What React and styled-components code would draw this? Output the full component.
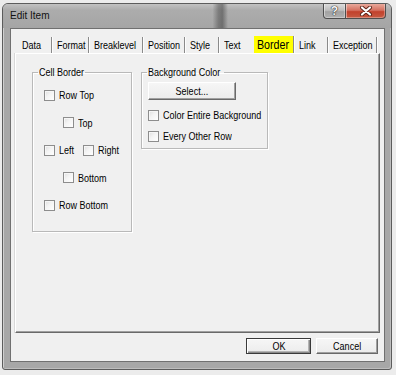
import React from 'react';
import styled, { createGlobalStyle } from 'styled-components';

const GlobalStyle = createGlobalStyle`
  html, body {
    margin: 0;
    padding: 0;
  }
  body {
    width: 396px;
    height: 375px;
    overflow: hidden;
    background: #ececec;
    font-family: "Liberation Sans", Arial, sans-serif;
    font-size: 11px;
    color: #000;
  }
`;

const Screen = styled.div`
  padding: 3px 0 0 2px;
`;

// the dialog font is a narrow face; squeeze Liberation Sans to its width
const Narrow = styled.span`
  display: inline-block;
  white-space: nowrap;
  transform: scaleX(0.82);
  transform-origin: ${p => p.$origin || 'left'} center;
`;

const Window = styled.div`
  width: 390px;
  height: 367px;
  box-sizing: border-box;
  display: flex;
  flex-direction: column;
  border: 1px solid #5c5c5c;
  border-radius: 6px 6px 3px 3px;
  background: #a7a7a7;
  box-shadow: inset 1px 1px 0 #cfcfcf, inset -1px -1px 0 #bdbdbd;
  overflow: hidden;
`;

const TitleBar = styled.div`
  height: 24px;
  flex-shrink: 0;
  display: flex;
  align-items: flex-start;
  background:
    linear-gradient(90deg, transparent 54%, rgba(40, 40, 40, 0.35) 55.5%, rgba(40, 40, 40, 0.45) 56.5%, transparent 58%),
    linear-gradient(180deg, #c2c2c2 0%, #acacac 25%, #a5a5a5 100%);
`;

const Title = styled.div`
  flex: 1;
  padding-left: 7px;
  line-height: 24px;
  font-size: 10px;
  color: #111;
`;

const CaptionButtons = styled.div`
  display: flex;
  margin-right: 5px;
`;

const CaptionButton = styled.div`
  width: ${p => p.$w}px;
  height: 15px;
  box-sizing: border-box;
  display: flex;
  align-items: center;
  justify-content: center;
  border: 1px solid #4e4e4e;
  border-top: none;
  border-left-width: ${p => (p.$first ? 1 : 0)}px;
  border-radius: ${p => (p.$first ? '0 0 0 4px' : '0 0 4px 0')};
  background: ${p =>
    p.$danger
      ? 'linear-gradient(180deg, #e9a99b 0%, #d47060 45%, #c2412c 55%, #c65a42 100%)'
      : 'linear-gradient(180deg, #dcdcdc 0%, #bdbdbd 45%, #a2a2a2 55%, #b0b0b0 100%)'};
  box-shadow: inset 1px 0 0 rgba(255, 255, 255, 0.45), inset -1px -1px 0 rgba(255, 255, 255, 0.3);
`;

const HelpGlyph = styled.span`
  font-weight: bold;
  font-size: 12px;
  line-height: 1;
  color: #f4f4f4;
  text-shadow: 0 0 1px #333, 0 0 1px #333, 0 0 1px #333;
`;

const Body = styled.div`
  flex: 1;
  display: flex;
  padding: 0 6px 7px 7px;
`;

const Client = styled.div`
  flex: 1;
  display: flex;
  flex-direction: column;
  border: 1px solid #707070;
  background: #f0f0f0;
  padding: 8px 4px 7px 4px;
`;

const TabRow = styled.div`
  display: flex;
  height: 16px;
  padding-left: 2px;
`;

const Tab = styled.div`
  width: ${p => p.$w}px;
  height: ${p => (p.$selected ? 17 : 16)}px;
  margin-top: ${p => (p.$selected ? -1 : 0)}px;
  box-sizing: border-box;
  padding-left: ${p => (p.$selected ? 3 : 5)}px;
  line-height: ${p => (p.$selected ? 17 : 16)}px;
  overflow: visible;
  background: ${p => (p.$selected ? '#ffff00' : 'transparent')};
  border-right: 1px solid ${p => (p.$divider ? '#8a8a8a' : 'transparent')};
  box-shadow: ${p => (p.$divider ? '1px 0 0 #fdfdfd' : 'none')};
  font-size: ${p => (p.$selected ? 13 : 11)}px;
`;

const Panel = styled.div`
  height: 280px;
  box-sizing: border-box;
  display: flex;
  align-items: flex-start;
  gap: 9px;
  padding: 12px 0 0 16px;
  border: 1px solid;
  border-color: #ffffff #696969 #696969 #ffffff;
  box-shadow: inset -1px -1px 0 #a0a0a0, -1px 0 0 #d8d8d8;
`;

const Group = styled.fieldset`
  margin: 0;
  min-width: 0;
  box-sizing: border-box;
  width: ${p => p.$w}px;
  height: ${p => p.$h}px;
  padding: ${p => p.$pad};
  border: 1px solid #b9b9b9;
  box-shadow: inset 1px 1px 0 #fff, 1px 1px 0 #fff;
  display: flex;
  flex-direction: column;
  align-items: flex-start;
`;

const Legend = styled.legend`
  box-sizing: border-box;
  width: ${p => p.$w}px;
  padding: 0 1px;
  margin-left: ${p => p.$offset}px;
  line-height: 13px;
  white-space: nowrap;
`;

const Rows = styled.div`
  display: flex;
  flex-direction: column;
  gap: ${p => p.$gap}px;
`;

const Row = styled.div`
  display: flex;
  align-items: center;
  gap: 8px;
  height: 14px;
  padding-left: ${p => p.$indent || 0}px;
`;

const CheckLabel = styled.label`
  display: flex;
  align-items: center;
  gap: 4px;
  width: ${p => (p.$w ? `${p.$w}px` : 'auto')};
`;

const Box = styled.input`
  appearance: none;
  flex-shrink: 0;
  margin: 0;
  width: 11px;
  height: 11px;
  border: 1px solid #8d8d8d;
  background: linear-gradient(135deg, #dedede 0%, #f4f4f4 45%, #ffffff 100%);
  box-shadow: inset 1px 1px 0 #f6f6f6;
`;

const Button = styled.button`
  width: ${p => p.$w}px;
  height: ${p => p.$h}px;
  margin: 0;
  padding: 0;
  font: inherit;
  color: #000;
  background: linear-gradient(180deg, #f6f6f6 0%, #ececec 100%);
  border: 1px solid;
  border-color: ${p => (p.$default ? '#3a3a3a' : '#ffffff #696969 #696969 #ffffff')};
  box-shadow: ${p =>
    p.$default
      ? 'inset 1px 1px 0 #fff, inset -1px -1px 0 #8a8a8a, inset -2px -2px 0 #b4b4b4'
      : 'inset -1px -1px 0 #a0a0a0'};
`;

const SelectButton = styled(Button)`
  margin-top: 3px;
`;

const BgRows = styled(Rows)`
  margin-top: 8px;
`;

const Footer = styled.div`
  display: flex;
  justify-content: flex-end;
  gap: 5px;
  margin-top: 5px;
  padding-right: 2px;
`;

const tabs = [
  { label: 'Data', w: 35 },
  { label: 'Format', w: 37 },
  { label: 'Breaklevel', w: 54 },
  { label: 'Position', w: 42 },
  { label: 'Style', w: 34 },
  { label: 'Text', w: 35, noDivider: true },
  { label: 'Border', w: 40, selected: true },
  { label: 'Link', w: 34 },
  { label: 'Exception', w: 49 },
];

const Check = ({ label, w }) => (
  <CheckLabel $w={w}>
    <Box type="checkbox" />
    <Narrow>{label}</Narrow>
  </CheckLabel>
);

const CloseGlyph = () => (
  <svg width="14" height="10" viewBox="0 0 14 10">
    <path d="M3 1.5 L11 8.5 M11 1.5 L3 8.5" stroke="#5a2418" strokeWidth="4" strokeLinecap="round" fill="none" />
    <path d="M3 1.5 L11 8.5 M11 1.5 L3 8.5" stroke="#ffffff" strokeWidth="2.2" strokeLinecap="round" fill="none" />
  </svg>
);

export default function App() {
  return (
    <Screen>
      <GlobalStyle />
      <Window>
        <TitleBar>
          <Title>Edit Item</Title>
          <CaptionButtons>
            <CaptionButton $w={23} $first>
              <HelpGlyph>?</HelpGlyph>
            </CaptionButton>
            <CaptionButton $w={40} $danger>
              <CloseGlyph />
            </CaptionButton>
          </CaptionButtons>
        </TitleBar>
        <Body>
          <Client>
            <TabRow>
              {tabs.map(t => (
                <Tab key={t.label} $w={t.w} $selected={t.selected} $divider={!t.noDivider}>
                  <Narrow>{t.label}</Narrow>
                </Tab>
              ))}
            </TabRow>
            <Panel>
              <Group $w={100} $h={166} $pad="9px 0 0 11px">
                <Legend $offset={-6} $w={47}><Narrow>Cell Border</Narrow></Legend>
                <Rows $gap={13.5}>
                  <Row><Check label="Row Top" /></Row>
                  <Row $indent={19}><Check label="Top" /></Row>
                  <Row>
                    <Check label="Left" w={31} />
                    <Check label="Right" />
                  </Row>
                  <Row $indent={19}><Check label="Bottom" /></Row>
                  <Row><Check label="Row Bottom" /></Row>
                </Rows>
              </Group>
              <Group $w={127} $h={83} $pad="0 0 0 6px">
                <Legend $offset={-1} $w={77}><Narrow>Background Color</Narrow></Legend>
                <SelectButton $w={88} $h={18}><Narrow $origin="center">Select...</Narrow></SelectButton>
                <BgRows $gap={7}>
                  <Row><Check label="Color Entire Background" /></Row>
                  <Row><Check label="Every Other Row" /></Row>
                </BgRows>
              </Group>
            </Panel>
            <Footer>
              <Button $w={65} $h={16} $default><Narrow $origin="center">OK</Narrow></Button>
              <Button $w={62} $h={16}><Narrow $origin="center">Cancel</Narrow></Button>
            </Footer>
          </Client>
        </Body>
      </Window>
    </Screen>
  );
}
